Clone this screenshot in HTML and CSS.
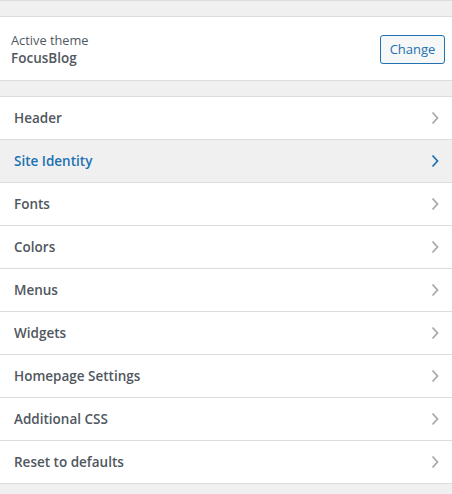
FILE: index.html
```html
<!DOCTYPE html>
<html>
<head>
<meta charset="utf-8">
<link rel="stylesheet" href="styles.css">
</head>
<body>
<div class="panel">
  <div class="band band-top"></div>
  <div class="theme">
    <div class="theme-info">
      <span class="theme-label">Active theme</span>
      <span class="theme-name">FocusBlog</span>
    </div>
    <button class="change-btn">Change</button>
  </div>
  <div class="band"></div>
  <ul class="sections">
    <li class="section"><span>Header</span><svg class="chev" viewBox="0 0 8 14"><polyline points="1.5,1.5 6.5,7 1.5,12.5"/></svg></li>
    <li class="section active"><span>Site Identity</span><svg class="chev" viewBox="0 0 8 14"><polyline points="1.5,1.5 6.5,7 1.5,12.5"/></svg></li>
    <li class="section"><span>Fonts</span><svg class="chev" viewBox="0 0 8 14"><polyline points="1.5,1.5 6.5,7 1.5,12.5"/></svg></li>
    <li class="section"><span>Colors</span><svg class="chev" viewBox="0 0 8 14"><polyline points="1.5,1.5 6.5,7 1.5,12.5"/></svg></li>
    <li class="section"><span>Menus</span><svg class="chev" viewBox="0 0 8 14"><polyline points="1.5,1.5 6.5,7 1.5,12.5"/></svg></li>
    <li class="section"><span>Widgets</span><svg class="chev" viewBox="0 0 8 14"><polyline points="1.5,1.5 6.5,7 1.5,12.5"/></svg></li>
    <li class="section"><span>Homepage Settings</span><svg class="chev" viewBox="0 0 8 14"><polyline points="1.5,1.5 6.5,7 1.5,12.5"/></svg></li>
    <li class="section"><span>Additional CSS</span><svg class="chev" viewBox="0 0 8 14"><polyline points="1.5,1.5 6.5,7 1.5,12.5"/></svg></li>
    <li class="section"><span>Reset to defaults</span><svg class="chev" viewBox="0 0 8 14"><polyline points="1.5,1.5 6.5,7 1.5,12.5"/></svg></li>
  </ul>
</div>
</body>
</html>
```
FILE: styles.css
```css
html, body {
  margin: 0;
  padding: 0;
  background: #f0f0f1;
  font-family: "Open Sans", "Noto Sans", sans-serif;
  color: #50575e;
}
.panel {
  width: 452px;
  height: 494px;
  overflow: hidden;
}
.band {
  height: 15px;
  background: #f0f0f1;
}
.band-top {
  border-top: 1px solid #dcdcde;
}
.theme {
  background: #fff;
  border-top: 1px solid #dcdcde;
  border-bottom: 1px solid #dcdcde;
  height: 63px;
  display: flex;
  align-items: center;
  justify-content: space-between;
  padding: 0 7px 0 11px;
}
.theme-info {
  display: flex;
  flex-direction: column;
  padding-top: 1px;
}
.theme-label {
  font-size: 12.8px;
  line-height: 18px;
  color: #50575e;
}
.theme-name {
  font-size: 13.5px;
  font-weight: 600;
  line-height: 19px;
  color: #50575e;
}
.change-btn {
  font-family: inherit;
  font-size: 13px;
  color: #2271b1;
  background: #f6f7f7;
  border: 1px solid #2271b1;
  border-radius: 3px;
  width: 65px;
  height: 29px;
  padding: 0;
  margin-top: 1px;
}
.sections {
  list-style: none;
  margin: 0;
  padding: 0;
  border-top: 1px solid #dcdcde;
}
.section {
  height: 42px;
  background: #fff;
  border-bottom: 1px solid #dcdcde;
  display: flex;
  align-items: center;
  justify-content: space-between;
  padding: 0 13px 0 14px;
  font-size: 13.5px;
  font-weight: 600;
  color: #50575e;
}
.section.active {
  background: #f0f0f1;
  color: #2271b1;
}
.chev {
  width: 8px;
  height: 14px;
  fill: none;
  stroke: #a7aaad;
  stroke-width: 1.8;
}
.section.active .chev {
  stroke: #2271b1;
}
```
